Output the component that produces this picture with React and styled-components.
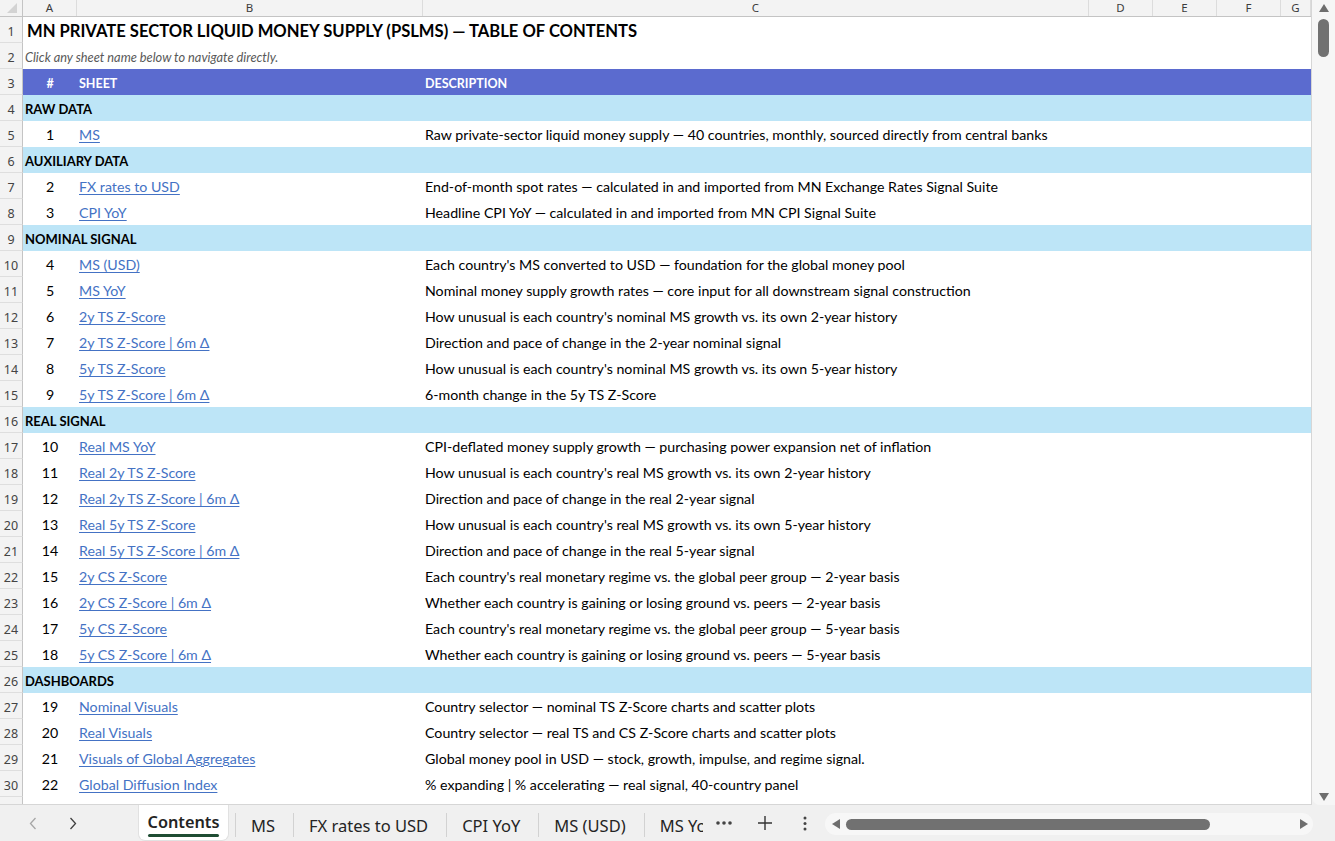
import React from "react";
import styled, { createGlobalStyle } from "styled-components";

const GRID = "23px 54px 346px 666px 64px 64px 64px 1fr";
const CELL_FONT = "Lato, Carlito, 'Noto Sans', sans-serif";
const UI_FONT = "'Noto Sans', 'Open Sans', sans-serif";

const rows = [
  { kind: "title", text: "MN PRIVATE SECTOR LIQUID MONEY SUPPLY (PSLMS) — TABLE OF CONTENTS" },
  { kind: "note", text: "Click any sheet name below to navigate directly." },
  { kind: "head" },
  { kind: "section", text: "RAW DATA" },
  { kind: "item", n: 1, sheet: "MS", desc: "Raw private-sector liquid money supply — 40 countries, monthly, sourced directly from central banks" },
  { kind: "section", text: "AUXILIARY DATA" },
  { kind: "item", n: 2, sheet: "FX rates to USD", desc: "End-of-month spot rates — calculated in and imported from MN Exchange Rates Signal Suite" },
  { kind: "item", n: 3, sheet: "CPI YoY", desc: "Headline CPI YoY — calculated in and imported from MN CPI Signal Suite" },
  { kind: "section", text: "NOMINAL SIGNAL" },
  { kind: "item", n: 4, sheet: "MS (USD)", desc: "Each country's MS converted to USD — foundation for the global money pool" },
  { kind: "item", n: 5, sheet: "MS YoY", desc: "Nominal money supply growth rates — core input for all downstream signal construction" },
  { kind: "item", n: 6, sheet: "2y TS Z-Score", desc: "How unusual is each country's nominal MS growth vs. its own 2-year history" },
  { kind: "item", n: 7, sheet: "2y TS Z-Score | 6m Δ", desc: "Direction and pace of change in the 2-year nominal signal" },
  { kind: "item", n: 8, sheet: "5y TS Z-Score", desc: "How unusual is each country's nominal MS growth vs. its own 5-year history" },
  { kind: "item", n: 9, sheet: "5y TS Z-Score | 6m Δ", desc: "6-month change in the 5y TS Z-Score" },
  { kind: "section", text: "REAL SIGNAL" },
  { kind: "item", n: 10, sheet: "Real MS YoY", desc: "CPI-deflated money supply growth — purchasing power expansion net of inflation" },
  { kind: "item", n: 11, sheet: "Real 2y TS Z-Score", desc: "How unusual is each country's real MS growth vs. its own 2-year history" },
  { kind: "item", n: 12, sheet: "Real 2y TS Z-Score | 6m Δ", desc: "Direction and pace of change in the real 2-year signal" },
  { kind: "item", n: 13, sheet: "Real 5y TS Z-Score", desc: "How unusual is each country's real MS growth vs. its own 5-year history" },
  { kind: "item", n: 14, sheet: "Real 5y TS Z-Score | 6m Δ", desc: "Direction and pace of change in the real 5-year signal" },
  { kind: "item", n: 15, sheet: "2y CS Z-Score", desc: "Each country's real monetary regime vs. the global peer group — 2-year basis" },
  { kind: "item", n: 16, sheet: "2y CS Z-Score | 6m Δ", desc: "Whether each country is gaining or losing ground vs. peers — 2-year basis" },
  { kind: "item", n: 17, sheet: "5y CS Z-Score", desc: "Each country's real monetary regime vs. the global peer group — 5-year basis" },
  { kind: "item", n: 18, sheet: "5y CS Z-Score | 6m Δ", desc: "Whether each country is gaining or losing ground vs. peers — 5-year basis" },
  { kind: "section", text: "DASHBOARDS" },
  { kind: "item", n: 19, sheet: "Nominal Visuals", desc: "Country selector — nominal TS Z-Score charts and scatter plots" },
  { kind: "item", n: 20, sheet: "Real Visuals", desc: "Country selector — real TS and CS Z-Score charts and scatter plots" },
  { kind: "item", n: 21, sheet: "Visuals of Global Aggregates", desc: "Global money pool in USD — stock, growth, impulse, and regime signal." },
  { kind: "item", n: 22, sheet: "Global Diffusion Index", desc: "% expanding | % accelerating — real signal, 40-country panel" },
  { kind: "blank" },
];

const tabs = ["MS", "FX rates to USD", "CPI YoY", "MS (USD)", "MS YoY", "2y TS Z-Score"];
const FILLS = { head: "#5b6bcf", section: "#bde5f7" };

export default function App() {
  return (
    <>
      <GlobalStyle />
      <Workbook>
        <Sheet>
          <ColumnHeader>
            <Corner><SelectAll /></Corner>
            {["A", "B", "C", "D", "E", "F", "G"].map((c) => (
              <ColLetter key={c}>{c}</ColLetter>
            ))}
          </ColumnHeader>
          {rows.map((r, i) => (
            <Row key={i} $fill={FILLS[r.kind]}>
              <RowNumber>{i + 1}</RowNumber>
              {r.kind === "title" && <Title $span="2 / -1">{r.text}</Title>}
              {r.kind === "note" && <Note $span="2 / -1">{r.text}</Note>}
              {r.kind === "head" && (
                <>
                  <HeadCell $center>#</HeadCell>
                  <HeadCell>SHEET</HeadCell>
                  <HeadCell>DESCRIPTION</HeadCell>
                </>
              )}
              {r.kind === "section" && <SectionCell $span="2 / -1">{r.text}</SectionCell>}
              {r.kind === "item" && (
                <>
                  <Cell $center>{r.n}</Cell>
                  <Cell><SheetLink href="#">{r.sheet}</SheetLink></Cell>
                  <Cell>{r.desc}</Cell>
                </>
              )}
            </Row>
          ))}
        </Sheet>

        <VScroll>
          <ArrowUp />
          <VThumb />
          <Spacer />
          <ArrowDown />
        </VScroll>

        <TabBar>
          <NavGroup>
            <NavButton $dim aria-label="previous sheet">
              <svg width="8" height="13" viewBox="0 0 8 13">
                <polyline points="6.5,1 1.5,6.5 6.5,12" fill="none" stroke="currentColor" strokeWidth="1.3" />
              </svg>
            </NavButton>
            <NavButton aria-label="next sheet">
              <svg width="8" height="13" viewBox="0 0 8 13">
                <polyline points="1.5,1 6.5,6.5 1.5,12" fill="none" stroke="currentColor" strokeWidth="1.3" />
              </svg>
            </NavButton>
          </NavGroup>
          <TabStrip>
            <ActiveTab>
              <span>Contents</span>
              <TabUnderline />
            </ActiveTab>
            {tabs.map((t) => (
              <Tab key={t}>{t}</Tab>
            ))}
          </TabStrip>
          <ToolButton $w={42} aria-label="more sheets">
            <svg width="16" height="4" viewBox="0 0 16 4">
              <circle cx="2" cy="2" r="1.8" fill="#444" />
              <circle cx="8" cy="2" r="1.8" fill="#444" />
              <circle cx="14" cy="2" r="1.8" fill="#444" />
            </svg>
          </ToolButton>
          <ToolButton $w={39} aria-label="new sheet">
            <svg width="16" height="16" viewBox="0 0 16 16">
              <path d="M8 1v14M1 8h14" stroke="#333" strokeWidth="1.4" fill="none" />
            </svg>
          </ToolButton>
          <ToolButton $w={41} aria-label="sheet options">
            <svg width="4" height="15" viewBox="0 0 4 15">
              <circle cx="2" cy="2" r="1.5" fill="#444" />
              <circle cx="2" cy="7.5" r="1.5" fill="#444" />
              <circle cx="2" cy="13" r="1.5" fill="#444" />
            </svg>
          </ToolButton>
          <HScroll>
            <ArrowLeft />
            <HThumb />
            <Spacer />
            <ArrowRight />
          </HScroll>
        </TabBar>
      </Workbook>
    </>
  );
}

const GlobalStyle = createGlobalStyle`
  html, body, #root {
    margin: 0;
    padding: 0;
    height: 100%;
  }
  body {
    overflow: hidden;
    background: #f0f0f0;
    font-family: ${CELL_FONT};
  }
  * {
    box-sizing: border-box;
  }
`;

const Workbook = styled.div`
  display: grid;
  grid-template-columns: 1312px 23px;
  grid-template-rows: 805px 36px;
  height: 100vh;
  background: #f0f0f0;
`;

const Sheet = styled.div`
  overflow: hidden;
  background: #ffffff;
  border-right: 1px solid #d6d6d6;
  border-bottom: 1px solid #d6d6d6;
`;

const ColumnHeader = styled.div`
  display: grid;
  grid-template-columns: ${GRID};
  height: 17px;
  background: #f3f3f3;
  border-bottom: 1px solid #c4c4c4;
`;

const Corner = styled.div`
  display: flex;
  align-items: flex-end;
  justify-content: flex-end;
  padding: 0 5px 3px 0;
  border-right: 1px solid #c4c4c4;
`;

const SelectAll = styled.div`
  width: 0;
  height: 0;
  border-left: 10px solid transparent;
  border-bottom: 10px solid #d3d3d3;
`;

const ColLetter = styled.div`
  font-family: ${UI_FONT};
  font-size: 11.5px;
  line-height: 16px;
  color: #3c3c3c;
  text-align: center;
  border-right: 1px solid #dcdcdc;
  overflow: hidden;
`;

const Row = styled.div`
  display: grid;
  grid-template-columns: ${GRID};
  height: 26px;
  background: ${(p) => p.$fill || "#ffffff"};
`;

const RowNumber = styled.div`
  font-family: ${UI_FONT};
  font-size: 12.5px;
  color: #444444;
  background: #f3f3f3;
  border-right: 1px solid #c4c4c4;
  border-bottom: 1px solid #dedede;
  display: flex;
  align-items: center;
  justify-content: center;
  padding-top: 3px;
`;

const Cell = styled.div`
  grid-column: ${(p) => p.$span || "auto"};
  display: flex;
  align-items: center;
  justify-content: ${(p) => (p.$center ? "center" : "flex-start")};
  padding-left: ${(p) => (p.$center ? "0" : "2px")};
  padding-top: 1px;
  font-size: 14.2px;
  color: #000000;
  white-space: nowrap;
  overflow: visible;
`;

const Title = styled(Cell)`
  padding-left: 4px;
  padding-top: 2px;
  font-size: 16.6px;
  font-weight: 700;
`;

const Note = styled(Cell)`
  font-size: 12.8px;
  font-style: italic;
  color: #595959;
`;

const HeadCell = styled(Cell)`
  padding-top: 3px;
  font-size: 12.5px;
  font-weight: 700;
  color: #ffffff;
`;

const SectionCell = styled(Cell)`
  font-size: 13px;
  font-weight: 700;
`;

const SheetLink = styled.a`
  color: #4472c4;
  text-decoration: underline;
  text-underline-offset: 2px;
`;

const VScroll = styled.div`
  display: flex;
  flex-direction: column;
  align-items: center;
  padding: 4px 0 4px 0;
  background: #f6f6f6;
  border-bottom-left-radius: 8px;
`;

const ArrowUp = styled.div`
  width: 0;
  height: 0;
  border-left: 5px solid transparent;
  border-right: 5px solid transparent;
  border-bottom: 8px solid #6e6e6e;
`;

const ArrowDown = styled(ArrowUp)`
  border-bottom: 0;
  border-top: 8px solid #6e6e6e;
`;

const VThumb = styled.div`
  width: 11px;
  height: 38px;
  margin-top: 7px;
  border-radius: 6px;
  background: #717171;
`;

const Spacer = styled.div`
  flex: 1;
`;

const TabBar = styled.div`
  grid-column: 1 / -1;
  display: flex;
  align-items: stretch;
  background: #f0f0f0;
`;

const NavGroup = styled.div`
  width: 138px;
  display: flex;
  align-items: center;
  padding-left: 13px;
`;

const NavButton = styled.button`
  width: 40px;
  height: 36px;
  padding: 0;
  border: 0;
  background: transparent;
  color: ${(p) => (p.$dim ? "#a6a6a6" : "#404040")};
  display: flex;
  align-items: center;
  justify-content: center;
`;

const TabStrip = styled.div`
  width: 565px;
  display: flex;
  align-items: stretch;
  overflow: hidden;
`;

const ActiveTab = styled.div`
  flex: none;
  width: 91px;
  display: flex;
  flex-direction: column;
  align-items: center;
  padding-top: 6px;
  margin-right: 6px;
  background: #ffffff;
  border: 1px solid #e1e1e1;
  border-top: 0;
  border-radius: 0 0 7px 7px;
  font-family: ${UI_FONT};
  font-size: 16.3px;
  font-weight: 600;
  color: #242424;
  line-height: 22px;
`;

const TabUnderline = styled.div`
  width: 71px;
  height: 3px;
  margin-top: 1px;
  border-radius: 2px;
  background: #1f4d33;
`;

const Tab = styled.div`
  flex: none;
  display: flex;
  align-items: center;
  padding: 4px 18px 0 16px;
  position: relative;
  font-family: ${UI_FONT};
  font-size: 16.5px;
  color: #242424;
  white-space: nowrap;

  &::before {
    content: "";
    position: absolute;
    left: 0;
    top: 8px;
    bottom: 4px;
    width: 1px;
    background: #d2d2d2;
  }
`;

const ToolButton = styled.button`
  flex: none;
  width: ${(p) => p.$w}px;
  padding: 0;
  border: 0;
  background: transparent;
  display: flex;
  align-items: center;
  justify-content: center;
`;

const HScroll = styled.div`
  width: 488px;
  height: 22px;
  margin: 8px 0 0 0;
  padding: 0 5px 0 7px;
  display: flex;
  align-items: center;
  background: #f7f7f7;
  border-radius: 11px;
`;

const ArrowLeft = styled.div`
  width: 0;
  height: 0;
  border-top: 5px solid transparent;
  border-bottom: 5px solid transparent;
  border-right: 8px solid #6e6e6e;
`;

const ArrowRight = styled(ArrowLeft)`
  border-right: 0;
  border-left: 8px solid #6e6e6e;
`;

const HThumb = styled.div`
  width: 364px;
  height: 11px;
  margin-left: 6px;
  border-radius: 6px;
  background: #717171;
`;
